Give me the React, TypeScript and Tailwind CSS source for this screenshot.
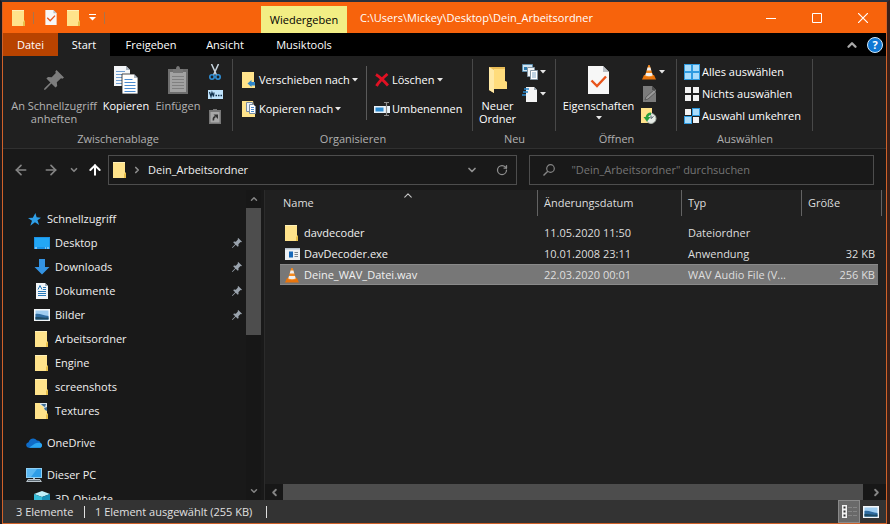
import type { ReactNode } from "react";
import { ArrowLeft, ArrowRight, ArrowUp, ChevronDown, ChevronLeft, ChevronRight, ChevronUp, RotateCw } from "lucide-react";

function Caret() {
  return (
    <svg aria-hidden="true" className="shrink-0" width="6" height="4" viewBox="0 0 6 4">
      <path d="M0 0h6L3 3.400z" fill="#e6e6e6" />
    </svg>
  );
}

function FolderIcon() {
  return (
    <svg aria-hidden="true" className="shrink-0" width="14" height="16" viewBox="0 0 14 16">
      <path d="M0 0h12v11l1 .5V16H0z" fill="#ffe38b" />
      <path d="M11 16v-4l2-2v6z" fill="#e8bf4a" />
      <path d="M0 0h12v1H0z" fill="#fff0b8" />
    </svg>
  );
}

function TexturesIcon() {
  return (
    <svg aria-hidden="true" className="shrink-0" width="14" height="16" viewBox="0 0 14 16">
      <path d="M0 0h12v11l1 .5V16H0z" fill="#ffe38b" />
      <path d="M11 16v-4l2-2v6z" fill="#e8bf4a" />
      <path d="M5 0h7v8l-3-2-1-3-3-1z" fill="#d9e4ea" />
      <path d="M6 1h5l-1 3-2-1zM9 5l3-1v4l-2-1z" fill="#3f6f96" />
    </svg>
  );
}

function CheckedPage({ className }: { className: string }) {
  return (
    <svg aria-hidden="true" className={className} viewBox="0 0 21 28">
      <path d="M0 0h15l6 6v22H0z" fill="#f7f7f7" />
      <path d="M15 0v6h6z" fill="#b9bec4" />
      <path d="M3.500 14.500l5.500 5.500 9-9.500" fill="none" stroke="#e8541b" strokeWidth="2.400" />
    </svg>
  );
}

function PinIcon({ size, color }: { size: number; color: string }) {
  return (
    <svg aria-hidden="true" className="shrink-0" width={size} height={size} viewBox="0 0 20 20">
      <path
        d="M12.500 0L20 7.500l-1.600 1.200-1.400-.5-4.200 4.100.4 3.700-1.700 1.600-4.100-4.100L1.600 19.600 0 20l.4-1.700 6-5.800L2.400 8.500 4 6.900l3.700.4 4.100-4.200-.5-1.500z"
        fill={color}
      />
    </svg>
  );
}

function CopyIcon() {
  return (
    <svg aria-hidden="true" width="24" height="28" viewBox="0 0 24 28">
      <path d="M0 0h12l4 4v16H0z" fill="#f4f6f8" />
      <path d="M12 0v4h4z" fill="#aab4be" />
      <path d="M2 5.500h9M2 8.500h11M2 11.500h11M2 14.500h11M2 17.500h11" stroke="#6f9fd4" />
      <path d="M8 8h12l4 4v16H8z" fill="#fff" stroke="#202020" strokeWidth="0.800" />
      <path d="M20 8v4h4z" fill="#aab4be" />
      <path d="M10.500 13.500h8M10.500 16.500h11M10.500 19.500h11M10.500 22.500h11M10.500 25.500h11" stroke="#4a8bd0" />
    </svg>
  );
}

function PasteIcon() {
  return (
    <svg aria-hidden="true" width="20" height="28" viewBox="0 0 20 28">
      <path d="M0 3h20v25H0z" fill="#6e6e6e" />
      <path d="M2 6h16v20H2z" fill="#a2a2a2" />
      <path d="M5 7V3h3c0-4 4-4 4 0h3v4z" fill="#777" />
      <path d="M4 10.500h12M4 13.500h12M4 16.500h12M4 19.500h12M4 22.500h12" stroke="#808080" />
    </svg>
  );
}

function CutIcon() {
  return (
    <svg aria-hidden="true" width="12" height="16" viewBox="0 0 12 16">
      <path d="M2.500 0l5 11M9.500 0l-5 11" fill="none" stroke="#c9d6e0" strokeWidth="1.500" />
      <circle cx="3" cy="13" r="2.200" fill="none" stroke="#2f8fd6" strokeWidth="1.600" />
      <circle cx="9" cy="13" r="2.200" fill="none" stroke="#2f8fd6" strokeWidth="1.600" />
    </svg>
  );
}

function CopyPathIcon() {
  return (
    <svg aria-hidden="true" width="15" height="9" viewBox="0 0 15 9">
      <path d="M0 0h15v9H0z" fill="#bfe2fb" />
      <path d="M1.500 2l1.500 4.500L4 2.500l1.500 4L6 2.500" fill="none" stroke="#12324e" strokeWidth="1.200" />
      <path d="M7.500 5.500H9M10 5.500h1.500M12.500 5.500H14" stroke="#12324e" strokeWidth="1.500" />
    </svg>
  );
}

function PasteLinkIcon() {
  return (
    <svg aria-hidden="true" width="12" height="15" viewBox="0 0 12 15">
      <path d="M0 1h4V0h4v1h4v14H0z" fill="#777" />
      <path d="M1.500 3h9v10.500h-9z" fill="#a8a8a8" />
      <path d="M4.500 11.500c-.5-2 .5-3.500 2-4" fill="none" stroke="#333" strokeWidth="1.500" />
      <path d="M4.500 5.500H9V10z" fill="#333" />
    </svg>
  );
}

function MoveToIcon() {
  return (
    <svg aria-hidden="true" width="14" height="16" viewBox="0 0 14 16">
      <path d="M0 0h12v12l1 1v3H0z" fill="#ffe38b" />
      <path d="M5.500 11.500L9.500 8v2H13v3.500H9.500V15z" fill="#2f86c9" />
    </svg>
  );
}

function CopyToIcon() {
  return (
    <svg aria-hidden="true" width="15" height="16" viewBox="0 0 15 16">
      <path d="M0 0h11l2 12v4H0z" fill="#ffe38b" />
      <path d="M4.500 1.500h6v9h-6z" fill="#eef3f8" stroke="#7b8da0" />
      <path d="M7.500 3.500h4l2 2v7h-6z" fill="#fff" stroke="#7b8da0" />
      <path d="M9 6.500h3M9 8.500h3M9 10.500h3" stroke="#4a8bd0" />
    </svg>
  );
}

function DeleteIcon() {
  return (
    <svg aria-hidden="true" width="14" height="14" viewBox="0 0 14 14">
      <path d="M1 1.500C5 4 9 8 13 12.500M12.500 1C9 4 4 8.500 1.500 13" fill="none" stroke="#e01123" strokeWidth="2.800" />
    </svg>
  );
}

function RenameIcon() {
  return (
    <svg aria-hidden="true" width="16" height="14" viewBox="0 0 16 14">
      <path d="M0 4h16v7H0z" fill="#e9f2f9" />
      <path d="M1.500 5.500h8v4h-8z" fill="#2b8ad0" />
      <path d="M10 .5h5M12.500 .5v13M10 13.500h5" stroke="#8f8f8f" strokeWidth="1.200" />
    </svg>
  );
}

function NewFolderIcon() {
  return (
    <svg aria-hidden="true" width="18" height="28" viewBox="0 0 18 28">
      <path d="M0 1h16v14l2 1v7H5v4L0 24z" fill="#e9bd57" />
      <path d="M5 3h11v12l2 1v7H5z" fill="#ffdc7c" />
      <path d="M0 1l5 3v23l-5-3z" fill="#ffe9a6" />
    </svg>
  );
}

function NewItemIcon() {
  return (
    <svg aria-hidden="true" width="16" height="16" viewBox="0 0 16 16">
      <path d="M.5 .5h10v7H.5z" fill="#cfe4f2" stroke="#5f8fae" />
      <path d="M2 3h3v3H2z" fill="#2b79ae" />
      <path d="M5.500 3.500h7v9h-7z" fill="#f3f6f8" stroke="#8496a4" />
      <path d="M8.500 6.500h7v9h-7z" fill="#fff" stroke="#8496a4" />
      <path d="M10 9h4M10 11h4M10 13h4" stroke="#7fa5c4" />
    </svg>
  );
}

function EasyAccessIcon() {
  return (
    <svg aria-hidden="true" width="16" height="16" viewBox="0 0 16 16">
      <path d="M4 1h8l3 3v12H4z" fill="#f5f5f5" />
      <path d="M12 1v3h3z" fill="#9aa6b0" />
      <path d="M2 3h5M1 6h5M0 9h4" stroke="#2b8ad0" strokeWidth="1.400" />
    </svg>
  );
}

function ConeIcon() {
  return (
    <svg aria-hidden="true" className="shrink-0" width="14" height="16" viewBox="0 0 14 16">
      <path d="M2 11h10l2 4.500H0z" fill="#e8740c" />
      <path d="M6.300 1h1.400L11 12c-1.500 1.600-6.500 1.600-8 0z" fill="#f58a1f" />
      <path d="M5.600 3.500h2.800l.9 3H4.700zM4 9h6l.7 2.500c-2 1-5.400 1-7.400 0z" fill="#efefef" />
    </svg>
  );
}

function EditIcon() {
  return (
    <svg aria-hidden="true" width="13" height="16" viewBox="0 0 13 16">
      <path d="M0 0h9l4 4v12H0z" fill="#7c7c7c" />
      <path d="M9 0v4h4z" fill="#4d4d4d" />
      <path d="M2 14l1-3 8-7 2 2-8 7z" fill="#9a9a9a" stroke="#4a4a4a" strokeWidth="0.700" />
    </svg>
  );
}

function HistoryIcon() {
  return (
    <svg aria-hidden="true" width="16" height="16" viewBox="0 0 16 16">
      <path d="M0 0h11v15H0z" fill="#ffe38b" />
      <circle cx="10" cy="10.500" r="5" fill="#e6ece6" stroke="#a8b0a8" />
      <path d="M10 7.500v3l2.500-2" fill="none" stroke="#4a5a66" />
      <path d="M10 4.500A5.500 5.500 0 0 0 4.700 9L2.500 9l3.500 4.500L9.500 9H7.200A3 3 0 0 1 10 7z" fill="#27a03c" />
    </svg>
  );
}

function TilesIcon({ tiles }: { tiles: [boolean, boolean, boolean, boolean] }) {
  const spots = [[0, 0], [8, 0], [0, 8], [8, 8]];
  return (
    <svg aria-hidden="true" width="16" height="16" viewBox="0 0 16 16">
      {tiles.map((selected, i) =>
        selected ? (
          <g key={i}>
            <rect x={spots[i][0]} y={spots[i][1]} width="8" height="8" fill="#2f9be0" />
            <rect x={spots[i][0] + 1} y={spots[i][1] + 1} width="6" height="6" fill="#a9dcfb" />
          </g>
        ) : (
          <rect key={i} x={spots[i][0] + 1} y={spots[i][1] + 1} width="6" height="6" fill="#f2f2f2" />
        ),
      )}
    </svg>
  );
}

function StarIcon() {
  return (
    <svg aria-hidden="true" width="13" height="13" viewBox="0 0 14 14">
      <path d="M8 0l1.300 4.600L14 5.200l-3.800 2.700L12 13 7.500 10 2.500 13.600 4.300 8.400 0 5.400l5.200-.3z" fill="#2f9fe8" />
    </svg>
  );
}

function DesktopIcon() {
  return (
    <svg aria-hidden="true" width="16" height="12" viewBox="0 0 16 12">
      <path d="M0 0h16v12H0z" fill="#1b93e6" />
      <path d="M1 1h14v9H1z" fill="#23a7f5" />
      <path d="M1 11h2M11 11h1M13 11h2" stroke="#d8f0ff" />
    </svg>
  );
}

function DownloadIcon() {
  return (
    <svg aria-hidden="true" width="16" height="16" viewBox="0 0 16 16">
      <path d="M5 0h6v8h4.500L8 15.500.5 8H5z" fill="#3493e2" />
    </svg>
  );
}

function DocumentIcon() {
  return (
    <svg aria-hidden="true" width="12" height="16" viewBox="0 0 12 16">
      <path d="M0 0h9l3 3v13H0z" fill="#f2f5f7" />
      <path d="M9 0v3h3z" fill="#9fb0bd" />
      <path d="M2 6.500L4 2.500l2 4M2 8.500h8M2 10.500h8M2 12.500h8M7 4.500h3M7 6.500h3" fill="none" stroke="#2879b8" />
    </svg>
  );
}

function PictureIcon() {
  return (
    <svg aria-hidden="true" width="16" height="12" viewBox="0 0 16 12">
      <path d="M0 0h16v12H0z" fill="#f3f6f8" />
      <path d="M1.500 1.500h13v9h-13z" fill="#9fcdf0" />
      <path d="M1.500 5c4-1 8 2 13 2v3.500h-13z" fill="#2f6ca0" />
      <path d="M1.500 8c4 0 8 1 13 .5v2h-13z" fill="#1d4a63" />
    </svg>
  );
}

function CloudIcon() {
  return (
    <svg aria-hidden="true" width="16" height="10" viewBox="0 0 16 10">
      <path d="M3 9.800C-.5 9.500-.8 5 2.600 4.300 3.400.4 8.500-1.200 11 2.600c2-.2 3.300.8 3.500 2.300C17 6 16.300 9.800 13.500 9.800z" fill="#0f6cc8" />
      <path d="M3 9.800L9 5.500c2-1.200 4.300-.9 5.500-.6C17 6 16.300 9.800 13.500 9.800z" fill="#2aa6f2" />
    </svg>
  );
}

function ComputerIcon() {
  return (
    <svg aria-hidden="true" width="16" height="14" viewBox="0 0 16 14">
      <path d="M0 0h16v10H0z" fill="#8fd0f5" />
      <path d="M1 1h14v8H1z" fill="#2f9de6" />
      <path d="M1 1h10L5 9H1z" fill="#5bb8f2" />
      <path d="M7 10h2v1h5l2 3H0l2-3h5z" fill="#b9c4cc" />
      <path d="M2 12.500h12" stroke="#5d6a73" />
    </svg>
  );
}

function CubeIcon() {
  return (
    <svg aria-hidden="true" width="16" height="16" viewBox="0 0 16 16">
      <path d="M0 3l8-3 8 3-8 3z" fill="#bff0fa" />
      <path d="M0 3l8 3v10l-8-3z" fill="#35bcd8" />
      <path d="M16 3L8 6v10l8-3z" fill="#1690b8" />
    </svg>
  );
}

function AppIcon() {
  return (
    <svg aria-hidden="true" width="15" height="12" viewBox="0 0 15 12">
      <path d="M0 0h15v12H0z" fill="#eef1f4" />
      <path d="M0 0h15v1.500H0z" fill="#b8c4ce" />
      <path d="M4 3.500h4v6H4z" fill="#1567b8" />
      <path d="M9.500 4.500H13M9.500 6.500H13M9.500 8.500H13" stroke="#7d8790" />
    </svg>
  );
}

function SearchIcon() {
  return (
    <svg aria-hidden="true" className="shrink-0" width="12" height="12" viewBox="0 0 12 12">
      <circle cx="7.500" cy="4.500" r="3.800" fill="none" stroke="#858585" strokeWidth="1.200" />
      <path d="M4.800 7.200L.5 11.500" stroke="#858585" strokeWidth="1.400" />
    </svg>
  );
}

function LargeButton({ icon, label, dim, caret, className }: { icon: ReactNode; label: string; dim?: boolean; caret?: boolean; className: string }) {
  return (
    <button type="button" className={`flex flex-col items-center pt-[7px] ${dim ? "text-[#b4b4b4]" : "text-white"} ${className}`}>
      <span className="flex h-7 items-center">{icon}</span>
      <span className="mt-[5px] leading-[13px]">{label}</span>
      {caret && <span className="mt-1"><Caret /></span>}
    </button>
  );
}

function SmallButton({ icon, label, title, caret }: { icon: ReactNode; label?: string; title?: string; caret?: boolean }) {
  return (
    <button type="button" aria-label={title} className="flex h-[22px] items-center gap-[2px] whitespace-nowrap text-white">
      <span className="flex w-4 shrink-0 justify-center">{icon}</span>
      {label}
      {caret && <Caret />}
    </button>
  );
}

function RibbonGroup({ title, className, children }: { title: string; className: string; children: ReactNode }) {
  return (
    <section aria-label={title} className={`flex shrink-0 flex-col pt-[3px] ${className}`}>
      <div className="flex h-[72px] border-r border-[#484848]">{children}</div>
      <div className="text-center leading-4 text-[#b0b0b0]">{title}</div>
    </section>
  );
}

const quickAccess = [
  { name: "Desktop", icon: <DesktopIcon />, pinned: true },
  { name: "Downloads", icon: <DownloadIcon />, pinned: true },
  { name: "Dokumente", icon: <DocumentIcon />, pinned: true },
  { name: "Bilder", icon: <PictureIcon />, pinned: true },
  { name: "Arbeitsordner", icon: <FolderIcon /> },
  { name: "Engine", icon: <FolderIcon /> },
  { name: "screenshots", icon: <FolderIcon /> },
  { name: "Textures", icon: <TexturesIcon /> },
];

const files = [
  { name: "davdecoder", icon: <FolderIcon />, date: "11.05.2020 11:50", type: "Dateiordner", size: "" },
  { name: "DavDecoder.exe", icon: <AppIcon />, date: "10.01.2008 23:11", type: "Anwendung", size: "32 KB" },
  { name: "Deine_WAV_Datei.wav", icon: <ConeIcon />, date: "22.03.2020 00:01", type: "WAV Audio File (V...", size: "256 KB", selected: true },
];

function TreeItem({ name, icon, pinned, nested }: { name: string; icon: ReactNode; pinned?: boolean; nested?: boolean }) {
  return (
    <a href="#" className={`flex h-6 shrink-0 items-center gap-[5px] pr-1 ${nested ? "pl-[31px]" : "pl-[23px]"}`}>
      <span className="flex w-4 shrink-0 justify-center">{icon}</span>
      <span className="grow">{name}</span>
      {pinned && <PinIcon size={10} color="#9aa3ad" />}
    </a>
  );
}

function TitleBar() {
  return (
    <header className="flex h-[31px] shrink-0 bg-[#f7630c]">
      <div className="flex w-[258px] shrink-0 items-center pl-[9px]">
        <FolderIcon />
        <span className="ml-[7px] h-3 w-px bg-[#a9744c]" />
        <button type="button" aria-label="Eigenschaften" className="ml-[11px]">
          <CheckedPage className="h-[15px] w-3" />
        </button>
        <button type="button" aria-label="Neuer Ordner" className="ml-[10px]">
          <FolderIcon />
        </button>
        <button type="button" aria-label="Symbolleiste anpassen" className="ml-2">
          <svg aria-hidden="true" width="7" height="7" viewBox="0 0 7 7">
            <path d="M0 .5h7" stroke="#fff" />
            <path d="M0 3h7L3.500 6.500z" fill="#fff" />
          </svg>
        </button>
        <span className="ml-2 h-3 w-px bg-[#a9744c]" />
      </div>
      <div className="mt-1 flex w-[86px] shrink-0 items-center justify-center bg-[#f2ee84] text-black">Wiedergeben</div>
      <h1 className="grow truncate pl-[13px] leading-[32px] text-white">C:\Users\Mickey\Desktop\Dein_Arbeitsordner</h1>
      <div className="flex shrink-0 text-white">
        <button type="button" aria-label="Minimieren" className="flex w-[46px] items-center justify-center">
          <svg aria-hidden="true" width="10" height="10" viewBox="0 0 10 10"><path d="M0 5.500h10" stroke="#fff" /></svg>
        </button>
        <button type="button" aria-label="Maximieren" className="flex w-[46px] items-center justify-center">
          <svg aria-hidden="true" width="10" height="10" viewBox="0 0 10 10"><path d="M.5 .5h9v9h-9z" fill="none" stroke="#fff" /></svg>
        </button>
        <button type="button" aria-label="Schließen" className="flex w-[46px] items-center justify-center">
          <svg aria-hidden="true" width="10" height="10" viewBox="0 0 10 10"><path d="M0 0l10 10M10 0L0 10" stroke="#fff" strokeWidth="1.200" /></svg>
        </button>
      </div>
    </header>
  );
}

function RibbonTabs() {
  return (
    <div className="flex h-[23px] shrink-0 bg-black text-white">
      <button type="button" className="w-[55px] bg-[#b84300]">Datei</button>
      <button type="button" className="w-[52px] bg-[#202020]">Start</button>
      <button type="button" className="w-[82px]">Freigeben</button>
      <button type="button" className="w-[66px]">Ansicht</button>
      <button type="button" className="ml-[3px] w-[86px]">Musiktools</button>
      <div className="flex grow items-center justify-end gap-2 pr-[3px]">
        <button type="button" aria-label="Menüband minimieren">
          <ChevronUp size={14} strokeWidth={4} color="#a8a8a8" />
        </button>
        <button type="button" aria-label="Hilfe" className="flex size-4 items-center justify-center rounded-full border border-[#cfe6f8] bg-[#0f78d4] font-bold">
          ?
        </button>
      </div>
    </div>
  );
}

function Ribbon() {
  return (
    <div className="flex h-[93px] shrink-0 overflow-hidden border-b border-[#303030] bg-[#202020]">
      <RibbonGroup title="Zwischenablage" className="w-[230px]">
        <LargeButton className="ml-[6px] w-[90px]" dim icon={<PinIcon size={20} color="#7d7d7d" />} label="An Schnellzugriff anheften" />
        <LargeButton className="w-[54px]" icon={<CopyIcon />} label="Kopieren" />
        <LargeButton className="w-[50px]" dim icon={<PasteIcon />} label="Einfügen" />
        <div className="flex flex-col pt-[2px] pl-1">
          <SmallButton title="Ausschneiden" icon={<CutIcon />} />
          <SmallButton title="Pfad kopieren" icon={<CopyPathIcon />} />
          <SmallButton title="Verknüpfung einfügen" icon={<PasteLinkIcon />} />
        </div>
      </RibbonGroup>
      <RibbonGroup title="Organisieren" className="w-[240px]">
        <div className="flex w-[133px] flex-col gap-[7px] pt-[10px] pl-2">
          <SmallButton icon={<MoveToIcon />} label="Verschieben nach" caret />
          <SmallButton icon={<CopyToIcon />} label="Kopieren nach" caret />
        </div>
        <div className="mt-[7px] flex h-[54px] flex-col gap-[7px] border-l border-[#5a5a5a] pt-[3px] pl-[7px]">
          <SmallButton icon={<DeleteIcon />} label="Löschen" caret />
          <SmallButton icon={<RenameIcon />} label="Umbenennen" />
        </div>
      </RibbonGroup>
      <RibbonGroup title="Neu" className="w-[83px]">
        <LargeButton className="w-[49px]" icon={<NewFolderIcon />} label="Neuer Ordner" />
        <div className="flex flex-col pt-[2px]">
          <SmallButton title="Neues Element" icon={<NewItemIcon />} caret />
          <SmallButton title="Einfacher Zugriff" icon={<EasyAccessIcon />} caret />
        </div>
      </RibbonGroup>
      <RibbonGroup title="Öffnen" className="w-[121px]">
        <LargeButton className="w-[85px]" icon={<CheckedPage className="h-7 w-[21px]" />} label="Eigenschaften" caret />
        <div className="flex flex-col pt-[2px]">
          <SmallButton title="Öffnen" icon={<ConeIcon />} caret />
          <SmallButton title="Bearbeiten" icon={<EditIcon />} />
          <SmallButton title="Verlauf" icon={<HistoryIcon />} />
        </div>
      </RibbonGroup>
      <RibbonGroup title="Auswählen" className="w-[136px]">
        <div className="flex flex-col pt-[2px] pl-[7px]">
          <SmallButton icon={<TilesIcon tiles={[true, true, true, true]} />} label="Alles auswählen" />
          <SmallButton icon={<TilesIcon tiles={[false, false, false, false]} />} label="Nichts auswählen" />
          <SmallButton icon={<TilesIcon tiles={[false, true, true, false]} />} label="Auswahl umkehren" />
        </div>
      </RibbonGroup>
    </div>
  );
}

function AddressRow() {
  return (
    <div className="flex h-[41px] shrink-0 items-center bg-[#191919] pr-3 pl-[10px]">
      <div className="flex w-[95px] shrink-0 items-center">
        <button type="button" aria-label="Zurück"><ArrowLeft size={16} strokeWidth={2.5} color="#858585" /></button>
        <button type="button" aria-label="Vorwärts" className="ml-[14px]"><ArrowRight size={16} strokeWidth={2.5} color="#858585" /></button>
        <button type="button" aria-label="Zuletzt besucht" className="ml-[10px]"><ChevronDown size={10} strokeWidth={4} color="#858585" /></button>
        <button type="button" aria-label="Nach oben" className="ml-2"><ArrowUp size={16} strokeWidth={3} color="#ffffff" /></button>
      </div>
      <div className="flex h-[30px] min-w-0 grow-[6] basis-0 items-center border border-[#4d4d4d] pr-2 pl-1 text-[#f0f0f0]">
        <FolderIcon />
        <ChevronRight className="ml-[5px]" size={10} strokeWidth={4} color="#8f8f8f" />
        <button type="button" className="ml-[6px]">Dein_Arbeitsordner</button>
        <button type="button" aria-label="Vorherige Orte" className="ml-auto"><ChevronDown size={12} strokeWidth={3.5} color="#8f8f8f" /></button>
        <button type="button" aria-label="Aktualisieren" className="ml-[18px]"><RotateCw size={12} strokeWidth={2.5} color="#8f8f8f" /></button>
      </div>
      <label className="ml-3 flex h-[30px] min-w-0 grow-[5] basis-0 items-center gap-2 border border-[#4d4d4d] pl-[13px]">
        <SearchIcon />
        <input
          type="text"
          aria-label="Suchen"
          placeholder={'"Dein_Arbeitsordner" durchsuchen'}
          className="w-0 grow bg-transparent pl-2 text-[#f0f0f0] outline-none placeholder:text-[#757575]"
        />
      </label>
    </div>
  );
}

function Sidebar() {
  return (
    <div className="flex w-[258px] shrink-0 overflow-hidden bg-[#191919]">
      <nav aria-label="Navigationsbereich" className="flex grow flex-col overflow-hidden pt-[17px] text-[#f0f0f0]">
        <TreeItem name="Schnellzugriff" icon={<StarIcon />} />
        {quickAccess.map((item) => (
          <TreeItem key={item.name} {...item} nested />
        ))}
        <div className="mt-2 shrink-0"><TreeItem name="OneDrive" icon={<CloudIcon />} /></div>
        <div className="mt-2 shrink-0"><TreeItem name="Dieser PC" icon={<ComputerIcon />} /></div>
        <TreeItem name="3D-Objekte" icon={<CubeIcon />} nested />
      </nav>
      <div aria-hidden="true" className="flex w-[15px] shrink-0 flex-col items-center bg-[#171717]">
        <ChevronUp className="my-1 shrink-0" size={10} strokeWidth={3.5} color="#858585" />
        <div className="h-[127px] w-full bg-[#4d4d4d]" />
        <ChevronDown className="mt-auto mb-1 shrink-0" size={10} strokeWidth={3.5} color="#858585" />
      </div>
    </div>
  );
}

function FileList() {
  return (
    <main className="flex min-w-0 grow flex-col bg-[#202020]">
      <div className="min-h-0 grow overflow-hidden pr-1 pl-[15px]">
        <table className="w-full table-fixed border-separate border-spacing-0 text-left text-[#dedede]">
          <colgroup>
            <col />
            <col className="w-[144px]" />
            <col className="w-[120px]" />
            <col className="w-[76px]" />
            <col className="w-1" />
          </colgroup>
          <thead>
            <tr className="h-[26px]">
              <th className="relative border-r border-[#636363] pl-[3px] font-normal">
                Name
                <ChevronUp className="absolute -top-px left-1/2 -translate-x-1/2" size={13} strokeWidth={2} color="#c8c8c8" />
              </th>
              <th className="border-r border-[#636363] pl-[6px] font-normal">Änderungsdatum</th>
              <th className="border-r border-[#636363] pl-[6px] font-normal">Typ</th>
              <th colSpan={2} className="border-r border-[#636363] pl-[6px] font-normal">Größe</th>
            </tr>
          </thead>
          <tbody>
            <tr aria-hidden="true" className="h-[6px]"><td colSpan={5} /></tr>
            {files.map((file) => (
              <tr key={file.name} className={`h-[21px] ${file.selected ? "*:border-y *:border-[#8a8a8a] *:bg-[#777777] *:last:border-0 *:last:bg-transparent" : ""}`}>
                <td className="text-[#f0f0f0]">
                  <span className="flex items-center gap-1 pl-1">
                    <span className="flex w-4 shrink-0 justify-center">{file.icon}</span>
                    {file.name}
                  </span>
                </td>
                <td className="pl-[6px]">{file.date}</td>
                <td className="pl-[6px] whitespace-nowrap">{file.type}</td>
                <td className="pr-[3px] text-right">{file.size}</td>
                <td />
              </tr>
            ))}
          </tbody>
        </table>
      </div>
      <div aria-hidden="true" className="flex h-4 shrink-0 items-center bg-[#171717]">
        <ChevronLeft className="mr-[3px] ml-1 shrink-0" size={11} strokeWidth={4} color="#858585" />
        <div className="h-full grow bg-[#4d4d4d]" />
        <ChevronRight className="mr-1 ml-2 shrink-0" size={11} strokeWidth={4} color="#858585" />
      </div>
    </main>
  );
}

function StatusBar() {
  return (
    <footer className="flex h-[23px] shrink-0 items-center bg-[#333333] pl-[13px] text-[#e0e0e0]">
      <span className="w-[68px]">3 Elemente</span>
      <span className="h-3 w-px bg-[#e0e0e0]" />
      <span className="w-[171px] pl-[10px]">1 Element ausgewählt (255 KB)</span>
      <span className="ml-[10px] h-3 w-px bg-[#e0e0e0]" />
      <div className="ml-auto flex h-full pr-1">
        <button type="button" aria-label="Details" aria-pressed="true" className="flex w-[22px] items-center justify-center border border-[#8a8a8a] bg-[#696969]">
          <svg aria-hidden="true" width="15" height="13" viewBox="0 0 15 13">
            <path d="M0 0h5v13H0z" fill="#f2f2f2" />
            <path d="M1.500 1.500h2v2h-2zM1.500 5.500h2v2h-2zM1.500 9.500h2v2h-2z" fill="#333" />
            <path d="M6 2.500h4M11 2.500h4M6 6.500h4M11 6.500h4M6 10.500h4M11 10.500h4" stroke="#858585" />
          </svg>
        </button>
        <button type="button" aria-label="Miniaturansicht" className="flex w-[22px] items-center justify-center">
          <PictureIcon />
        </button>
      </div>
    </footer>
  );
}

export default function App() {
  return (
    <div className="flex h-screen flex-col border-2 border-t-[#2b303b] border-r-[3px] border-r-[#3b2018] border-b-0 border-l-[#1f1a1c] font-['Open_Sans','Noto_Sans',sans-serif] text-[11px] leading-4">
      <div className="flex min-h-0 grow flex-col border-x border-b border-[#d0622a] bg-[#191919]">
        <TitleBar />
        <RibbonTabs />
        <Ribbon />
        <AddressRow />
        <div className="flex min-h-0 grow">
          <Sidebar />
          <div className="ml-[3px] w-px shrink-0 bg-[#2b2b2b]" />
          <FileList />
        </div>
        <StatusBar />
      </div>
    </div>
  );
}
